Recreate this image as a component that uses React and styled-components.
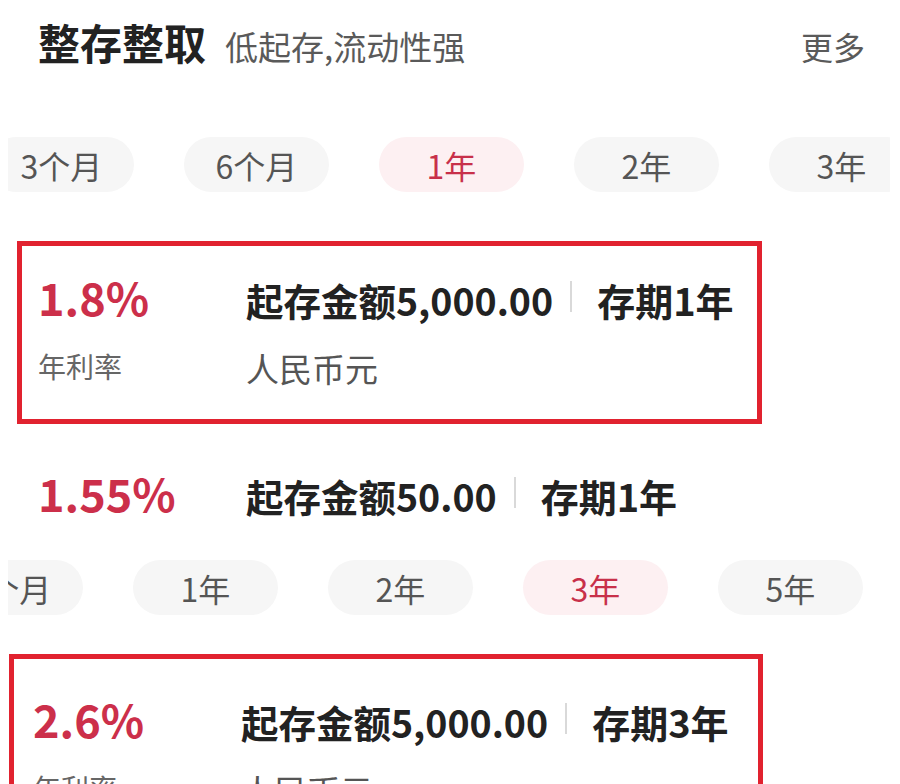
import React from "react";
import styled, { createGlobalStyle } from "styled-components";

const Global = createGlobalStyle`
    html, body {
        margin: 0;
        padding: 0;
        background: #ffffff;
        overflow: hidden;
    }
    body {
        font-family: "Noto Sans CJK SC", "Noto Sans", sans-serif;
        color: #222;
    }
`;

const Page = styled.div`
    width: 900px;
    height: 784px;
    overflow: hidden;
`;

const Header = styled.div`
    display: flex;
    align-items: baseline;
    padding: 21px 35px 0 38px;
    line-height: 1;
`;

const Title = styled.h1`
    margin: 0;
    font-size: 42px;
    font-weight: 700;
    color: #222;
    line-height: 1;
`;

const Subtitle = styled.span`
    margin-left: 19px;
    font-size: 33px;
    color: #5a5a5a;
`;

const More = styled.span`
    margin-left: auto;
    font-size: 32px;
    color: #5a5a5a;
`;

const TabScroller = styled.div`
    margin: ${({ top }) => top}px 10px 0 8px;
    overflow: hidden;
`;

const TabTrack = styled.div`
    display: flex;
    gap: 50px;
    margin-left: ${({ shift }) => shift}px;
`;

const Pill = styled.div`
    flex: 0 0 145px;
    height: 55px;
    border-radius: 28px;
    display: flex;
    align-items: center;
    justify-content: center;
    font-size: 32px;
    line-height: 1;
    background: ${({ active }) => (active ? "#fdf0f2" : "#f6f6f6")};
    color: ${({ active }) => (active ? "#c8304a" : "#555")};
`;

const Card = styled.div`
    box-sizing: border-box;
    margin: ${({ top }) => top}px 0 0 ${({ left }) => left}px;
    width: ${({ w }) => w}px;
    height: ${({ h }) => (h ? `${h}px` : "auto")};
    border: 5px solid ${({ outlined }) => (outlined ? "#e1222f" : "transparent")};
    padding: ${({ padTop }) => padTop}px 0 0 ${({ padLeft }) => padLeft}px;
`;

const Row = styled.div`
    display: flex;
    align-items: ${({ top }) => (top ? "flex-start" : "baseline")};
    line-height: 1;
    margin-top: ${({ gap }) => gap || 0}px;
`;

const Rate = styled.div`
    width: 208px;
    font-size: 45px;
    font-weight: 700;
    color: #cc2f4a;
`;

const Amount = styled.span`
    font-size: 37.5px;
    font-weight: 700;
    color: #222;
`;

const Divider = styled.span`
    display: inline-block;
    align-self: center;
    width: 2px;
    height: 31px;
    background: #d9d9d9;
    margin: 0 25px 0 17px;
`;

const Term = styled.span`
    font-size: 38px;
    font-weight: 700;
    color: #222;
`;

const RateLabel = styled.div`
    width: 208px;
    font-size: 28px;
    color: #666;
`;

const Currency = styled.span`
    font-size: 33px;
    color: #555;
`;

const Tabs = ({ items, active, shift, top }) => (
    <TabScroller top={top}>
        <TabTrack shift={shift}>
            {items.map((t) => (
                <Pill key={t} active={t === active}>
                    {t}
                </Pill>
            ))}
        </TabTrack>
    </TabScroller>
);

const Product = ({ rate, amount, term, details, ...box }) => (
    <Card {...box}>
        <Row>
            <Rate>{rate}</Rate>
            <Amount>起存金额{amount}</Amount>
            <Divider />
            <Term>存期{term}</Term>
        </Row>
        {details && (
            <Row top gap={33}>
                <RateLabel>年利率</RateLabel>
                <Currency>人民币元</Currency>
            </Row>
        )}
    </Card>
);

const App = () => {
    return (
        <Page>
            <Global />
            <Header>
                <Title>整存整取</Title>
                <Subtitle>低起存,流动性强</Subtitle>
                <More>更多</More>
            </Header>

            <Tabs
                top={74}
                shift={-19}
                items={["3个月", "6个月", "1年", "2年", "3年"]}
                active="1年"
            />

            <Product
                outlined
                top={49}
                left={17}
                w={745}
                h={183}
                padTop={28}
                padLeft={16}
                rate="1.8%"
                amount="5,000.00"
                term="1年"
                details
            />

            <Product
                top={14}
                left={17}
                w={745}
                padTop={27}
                padLeft={16}
                rate="1.55%"
                amount="50.00"
                term="1年"
            />

            <Tabs
                top={40}
                shift={-70}
                items={["6个月", "1年", "2年", "3年", "5年"]}
                active="3年"
            />

            <Product
                outlined
                top={39}
                left={9}
                w={754}
                h={183}
                padTop={37}
                padLeft={19}
                rate="2.6%"
                amount="5,000.00"
                term="3年"
                details
            />
        </Page>
    );
};

export default App;
